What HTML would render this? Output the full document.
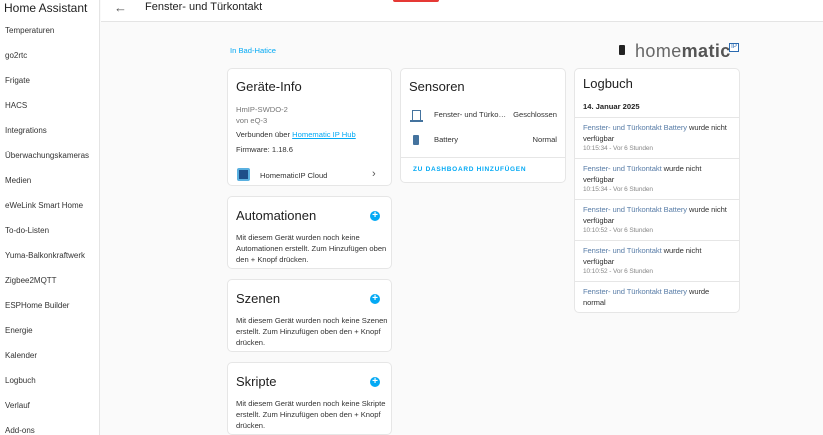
<!DOCTYPE html>
<html><head><meta charset="utf-8"><style>
*{margin:0;padding:0;box-sizing:border-box}
body{width:823px;height:435px;overflow:hidden;background:#fafafa;font-family:"Liberation Sans",sans-serif;color:#212121;position:relative}
.side{position:absolute;left:0;top:0;width:100px;height:435px;background:#fff;border-right:1px solid #e4e4e4}
.side .t{position:absolute;left:4px;top:1px;font-size:12px;color:#212121}
.side .i{position:absolute;left:5px;font-size:8px;color:#333}
.hdr{position:absolute;left:101px;top:0;right:0;height:22px;background:#fff;border-bottom:1px solid #e4e4e4}
.hdr .b{position:absolute;left:13px;top:0;font-size:13px;color:#555}
.hdr .h{position:absolute;left:44px;top:1px;font-size:11px}
.red{position:absolute;left:393px;top:0;width:46px;height:2px;background:#e53935;border-radius:0 0 3px 3px}
.card{position:absolute;background:#fff;border:1px solid #e6e6e6;border-radius:5px}
.ct{position:absolute;left:8px;font-size:13px;color:#212121}
.s{position:absolute;font-size:7.6px;color:#333}
.g{color:#777}
.lk{color:#03a9f4;text-decoration:underline}
.plus{position:absolute;right:11px;width:10px;height:10px;border-radius:50%;background:#03a9f4;color:#fff;font-size:10px;line-height:10px;text-align:center;font-weight:bold}
.lb{position:absolute;left:0;right:0;border-top:1px solid #e6e6e6;padding:4px 6px 0 8px;font-size:7.6px;line-height:11px;color:#333;letter-spacing:-0.1px}
.lb a{color:#5a7ea8}
.lb .tm{font-size:6.5px;color:#888;line-height:10px}
</style></head><body>
<div class="side">
<div class="t">Home Assistant</div>
<div class="i" style="top:26px">Temperaturen</div>
<div class="i" style="top:51px">go2rtc</div>
<div class="i" style="top:76px">Frigate</div>
<div class="i" style="top:101px">HACS</div>
<div class="i" style="top:126px">Integrations</div>
<div class="i" style="top:151px">Überwachungskameras</div>
<div class="i" style="top:176px">Medien</div>
<div class="i" style="top:201px">eWeLink Smart Home</div>
<div class="i" style="top:226px">To-do-Listen</div>
<div class="i" style="top:251px">Yuma-Balkonkraftwerk</div>
<div class="i" style="top:276px">Zigbee2MQTT</div>
<div class="i" style="top:301px">ESPHome Builder</div>
<div class="i" style="top:326px">Energie</div>
<div class="i" style="top:351px">Kalender</div>
<div class="i" style="top:376px">Logbuch</div>
<div class="i" style="top:401px">Verlauf</div>
<div class="i" style="top:426px">Add-ons</div>
</div>
<div class="hdr"><div class="b">←</div><div class="h">Fenster- und Türkontakt</div></div>
<div class="red"></div>
<div class="s" style="left:230px;top:46px;color:#03a9f4">In Bad-Hatice</div>
<div style="position:absolute;left:619px;top:45px;width:6px;height:10px;background:#222;border-radius:1px"></div>
<div style="position:absolute;left:635px;top:41px;font-size:18px;color:#666;letter-spacing:0.4px">home<span style="color:#555;font-weight:bold">matic</span></div>
<div style="position:absolute;left:729px;top:43px;width:10px;height:9px;border:1px solid #2a6ab0;font-size:6px;color:#2a6ab0;text-align:center;line-height:7px;background:#fff">IP</div>

<div class="card" style="left:227px;top:68px;width:165px;height:118px">
<div class="ct" style="top:10px">Geräte-Info</div>
<div class="s g" style="left:8px;top:36px">HmIP-SWDO-2</div>
<div class="s g" style="left:8px;top:47px">von eQ-3</div>
<div class="s" style="left:8px;top:61px">Verbunden über <span class="lk">Homematic IP Hub</span></div>
<div class="s" style="left:8px;top:76px">Firmware: 1.18.6</div>
<div style="position:absolute;left:9px;top:99px;width:13px;height:13px;background:#1e4f8a;border-radius:2px;border:2px solid #5ab0e0"></div>
<div class="s" style="left:32px;top:102px">HomematicIP Cloud</div>
<div class="s" style="left:144px;top:99px;font-size:11px;color:#555">›</div>
</div>

<div class="card" style="left:227px;top:196px;width:165px;height:73px">
<div class="ct" style="top:11px">Automationen</div><div class="plus" style="top:14px">+</div>
<div class="s" style="left:8px;top:35px;line-height:11px;width:152px">Mit diesem Gerät wurden noch keine Automationen erstellt. Zum Hinzufügen oben den + Knopf drücken.</div>
</div>
<div class="card" style="left:227px;top:279px;width:165px;height:73px">
<div class="ct" style="top:11px">Szenen</div><div class="plus" style="top:14px">+</div>
<div class="s" style="left:8px;top:35px;line-height:11px;width:152px">Mit diesem Gerät wurden noch keine Szenen erstellt. Zum Hinzufügen oben den + Knopf drücken.</div>
</div>
<div class="card" style="left:227px;top:362px;width:165px;height:73px">
<div class="ct" style="top:11px">Skripte</div><div class="plus" style="top:14px">+</div>
<div class="s" style="left:8px;top:35px;line-height:11px;width:152px">Mit diesem Gerät wurden noch keine Skripte erstellt. Zum Hinzufügen oben den + Knopf drücken.</div>
</div>

<div class="card" style="left:400px;top:68px;width:166px;height:115px">
<div class="ct" style="top:10px">Sensoren</div>
<div style="position:absolute;left:11px;top:41px;width:9px;height:10px;border:1.5px solid #44739e;border-bottom:none"></div>
<div style="position:absolute;left:9px;top:51px;width:13px;height:1.5px;background:#44739e"></div>
<div class="s" style="left:33px;top:41px;width:75px;white-space:nowrap;overflow:hidden;text-overflow:ellipsis">Fenster- und Türkontakt</div>
<div class="s" style="right:8px;top:41px">Geschlossen</div>
<div style="position:absolute;left:12px;top:66px;width:6px;height:10px;background:#44739e;border-radius:1px"></div>
<div class="s" style="left:33px;top:66px">Battery</div>
<div class="s" style="right:8px;top:66px">Normal</div>
<div style="position:absolute;left:0;right:0;top:88px;border-top:1px solid #e6e6e6"></div>
<div class="s" style="left:12px;top:97px;font-size:6.5px;font-weight:bold;color:#03a9f4;letter-spacing:0.7px">ZU DASHBOARD HINZUFÜGEN</div>
</div>

<div class="card" style="left:574px;top:68px;width:166px;height:245px">
<div class="ct" style="top:7px;font-size:13px">Logbuch</div>
<div class="s" style="left:8px;top:33px;font-weight:bold;color:#222">14. Januar 2025</div>
<div class="lb" style="top:48px;height:42px"><a>Fenster- und Türkontakt Battery</a> wurde nicht<br>verfügbar<div class="tm">10:15:34 - Vor 6 Stunden</div></div>
<div class="lb" style="top:89px;height:42px"><a>Fenster- und Türkontakt</a> wurde nicht<br>verfügbar<div class="tm">10:15:34 - Vor 6 Stunden</div></div>
<div class="lb" style="top:130px;height:42px"><a>Fenster- und Türkontakt Battery</a> wurde nicht<br>verfügbar<div class="tm">10:10:52 - Vor 6 Stunden</div></div>
<div class="lb" style="top:171px;height:42px"><a>Fenster- und Türkontakt</a> wurde nicht<br>verfügbar<div class="tm">10:10:52 - Vor 6 Stunden</div></div>
<div class="lb" style="top:212px;height:32px"><a>Fenster- und Türkontakt Battery</a> wurde<br>normal</div>
</div>
</body></html>
